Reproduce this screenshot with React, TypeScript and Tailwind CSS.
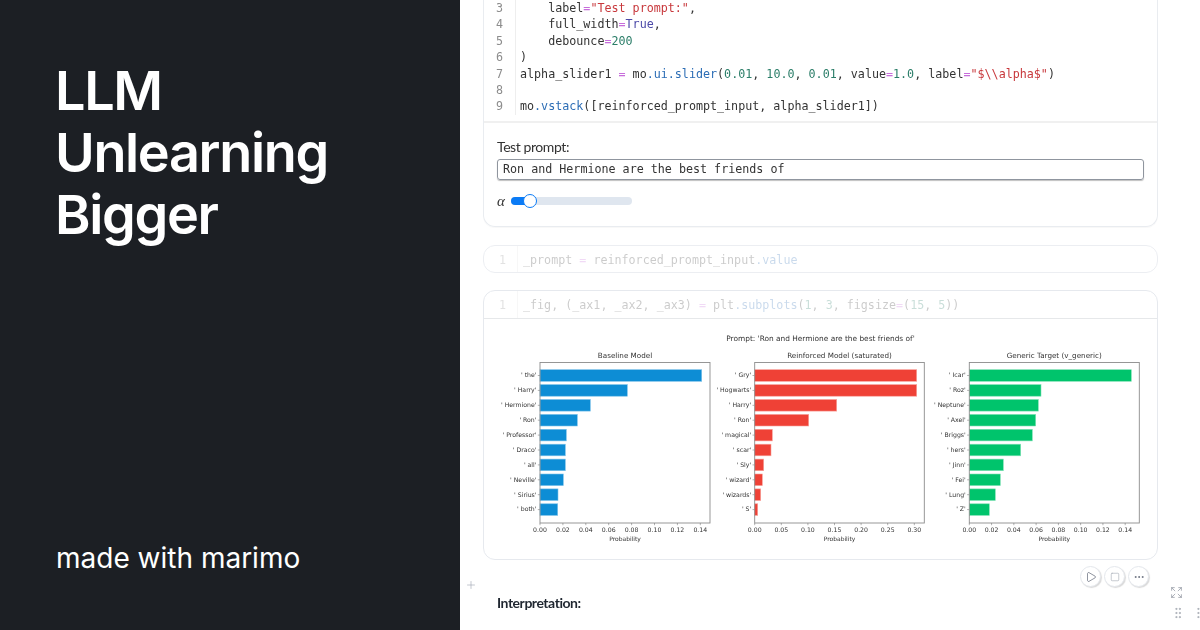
import { Play, Square, Ellipsis, Plus, Expand, GripVertical } from "lucide-react";
import type { ReactNode } from "react";

const STR = "text-[#c8383c]";
const OP = "text-[#c76ddb]";
const NUM = "text-[#2a7d68]";
const PROP = "text-[#2c6db5]";
const KW = "text-[#4c4aa8]";

function Ln({ n, children }: { n: number; children?: ReactNode }) {
  return (
    <div className="flex h-[16.4px] items-center leading-[16.4px]">
      <span className="w-[19px] text-right text-[#8c8c8c]">{n}</span>
      <span className="ml-[12px] h-full w-px bg-[#eeeeee]" />
      <span className="ml-[4px] whitespace-pre text-[#333333]">{children}</span>
    </div>
  );
}

function FadedLine({ children }: { children: ReactNode }) {
  return (
    <div className="flex h-full items-center opacity-25">
      <span className="w-[22px] pt-[3px] text-right text-[#8c8c8c]">1</span>
      <span className="ml-[11px] h-full w-px bg-[#dddddd]" />
      <span className="ml-[5px] whitespace-pre pt-[3px] text-[#333333]">{children}</span>
    </div>
  );
}

type Bar = [string, number];

const baseline: Bar[] = [
  ["' the'", 701.7], ["' Harry'", 627.3], ["' Hermione'", 590.3], ["' Ron'", 577.3], ["' Professor'", 566.3],
  ["' Draco'", 565.3], ["' all'", 565.3], ["' Neville'", 563.3], ["' Sirius'", 558], ["' both'", 557.7],
];
const reinforced: Bar[] = [
  ["' Gry'", 916.7], ["' Hogwarts'", 916.7], ["' Harry'", 836.7], ["' Ron'", 808.7], ["' magical'", 772.3],
  ["' scar'", 771], ["' Sly'", 763.7], ["' wizard'", 762.3], ["' wizards'", 760.7], ["' S'", 757.7],
];
const generic: Bar[] = [
  ["' Icar'", 1131.3], ["' Roz'", 1041], ["' Neptune'", 1038.3], ["' Axel'", 1035.7], ["' Briggs'", 1032.3],
  ["' hers'", 1020.7], ["' Jinn'", 1003.3], ["' Fei'", 1000.3], ["' Lung'", 995.3], ["' Z'", 989.3],
];

function Chart({ title, x0, x1, bars, color, edge, ticks, tickStart, tickStep }: {
  title: string; x0: number; x1: number; bars: Bar[]; color: string; edge: string;
  ticks: string[]; tickStart: number; tickStep: number;
}) {
  const mid = (x0 + x1) / 2;
  return (
    <g fontFamily="DejaVu Sans, sans-serif" fill="#333333">
      <text x={mid} y={356.8} fontSize="7.2" textAnchor="middle">{title}</text>
      {bars.map(([label, end], i) => {
        const y = 368.7 + i * 14.9;
        return (
          <g key={label}>
            <rect x={x0} y={y} width={end - x0} height={11.6} fill={color} stroke={edge} strokeWidth="0.6" />
            <line x1={x0 - 2.2} x2={x0} y1={y + 5.8} y2={y + 5.8} stroke="#666666" strokeWidth="0.5" />
            <text x={x0 - 3.5} y={y + 7.6} fontSize="6.2" textAnchor="end">{label}</text>
          </g>
        );
      })}
      <rect x={x0} y={361.5} width={x1 - x0} height={160.5} fill="none" stroke="#8c8c8c" strokeWidth="0.9" />
      {ticks.map((t, i) => {
        const x = tickStart + i * tickStep;
        return (
          <g key={t}>
            <line x1={x} x2={x} y1={522} y2={524.2} stroke="#666666" strokeWidth="0.5" />
            <text x={x} y={531.2} fontSize="6.2" textAnchor="middle">{t}</text>
          </g>
        );
      })}
      <text x={mid} y={539.8} fontSize="6" textAnchor="middle">Probability</text>
    </g>
  );
}

function Charts() {
  return (
    <svg viewBox="484 318 673 240" className="block h-[240px] w-[673px] blur-[0.35px]">
      <text x={820.5} y={340.2} fontSize="7.4" textAnchor="middle" fontFamily="DejaVu Sans, sans-serif" fill="#333333">
        Prompt: 'Ron and Hermione are the best friends of'
      </text>
      <Chart title="Baseline Model" x0={540} x1={710} bars={baseline} color="#0d8dd5" edge="#7cc2ea"
        ticks={["0.00", "0.02", "0.04", "0.06", "0.08", "0.10", "0.12", "0.14"]} tickStart={540} tickStep={22.9} />
      <Chart title="Reinforced Model (saturated)" x0={754.7} x1={924.3} bars={reinforced} color="#ef4136" edge="#f9a29c"
        ticks={["0.00", "0.05", "0.10", "0.15", "0.20", "0.25", "0.30"]} tickStart={754.7} tickStep={26.6} />
      <Chart title="Generic Target (v_generic)" x0={969.3} x1={1139.3} bars={generic} color="#00c46c" edge="#80e2b6"
        ticks={["0.00", "0.02", "0.04", "0.06", "0.08", "0.10", "0.12", "0.14"]} tickStart={969.3} tickStep={22.27} />
    </svg>
  );
}

function RoundBtn({ children }: { children: ReactNode }) {
  return (
    <button className="flex h-[21px] w-[21px] items-center justify-center rounded-full border border-[#e4e7ec] bg-white text-[#6b7280] shadow-[1px_1px_1px_rgba(0,0,0,0.15)]">
      {children}
    </button>
  );
}

export default function App() {
  return (
    <div className="flex h-[630px] w-[1200px] overflow-hidden bg-white">
      <aside className="flex h-full w-[460px] shrink-0 flex-col justify-between bg-[#1c1f24] pb-[53px] pl-[56px] pt-[60px] font-['Inter',sans-serif] text-white">
        <h1 className="-ml-px text-[54px] font-semibold leading-[62px] tracking-[-0.025em]">
          LLM
          <br />
          Unlearning
          <br />
          Bigger
        </h1>
        <p className="text-[28px] leading-[38px]">made with marimo</p>
      </aside>

      <main className="relative flex-1 overflow-hidden blur-[0.35px]">
        <div className="ml-[23px] w-[675px] font-['DejaVu_Sans_Mono',monospace] text-[11.7px]">
          <section className="rounded-b-xl border border-t-0 border-[#e9ecf0] shadow-[0_1px_1px_rgba(0,0,0,0.03)]">
            <div className="h-[123px] overflow-hidden border-b-2 border-[#f0f0f0]">
              <Ln n={3}>{"    label"}<span className={OP}>=</span><span className={STR}>"Test prompt:"</span>,</Ln>
              <Ln n={4}>{"    full_width"}<span className={OP}>=</span><span className={KW}>True</span>,</Ln>
              <Ln n={5}>{"    debounce"}<span className={OP}>=</span><span className={NUM}>200</span></Ln>
              <Ln n={6}>)</Ln>
              <Ln n={7}>
                alpha_slider1 <span className={OP}>=</span> mo<span className={PROP}>.ui.slider</span>(<span className={NUM}>0.01</span>, <span className={NUM}>10.0</span>, <span className={NUM}>0.01</span>, value<span className={OP}>=</span><span className={NUM}>1.0</span>, label<span className={OP}>=</span><span className={STR}>"$\\alpha$"</span>)
              </Ln>
              <Ln n={8} />
              <Ln n={9}>mo<span className={PROP}>.vstack</span>([reinforced_prompt_input, alpha_slider1])</Ln>
            </div>
            <div className="h-[103px] px-[13px] pt-[14px]">
              <div className="font-['Lato',sans-serif] text-[14px] leading-[20px] tracking-[-0.03em] text-[#333333]">Test prompt:</div>
              <div className="mt-[2px] flex h-[21px] w-[647px] items-center rounded-[3px] border border-[#8f959e] px-[5px] leading-none text-[#333333] shadow-[0_1px_1px_rgba(0,0,0,0.25)]">
                Ron and Hermione are the best friends of
              </div>
              <div className="mt-[11px] flex items-center">
                <span className="w-[14px] font-['Liberation_Serif',serif] text-[15px] italic leading-[20px] text-[#333333]">α</span>
                <div className="relative h-[8px] w-[121px] rounded-full bg-[#dfe6ef]">
                  <div className="h-full w-[19px] rounded-l-full bg-[#0b7bf5]" />
                  <div className="absolute left-[12px] top-[-3px] h-[14px] w-[14px] rounded-full border border-[#0b7bf5] bg-white" />
                </div>
              </div>
            </div>
          </section>

          <section className="mt-[18px] h-[28px] rounded-xl border border-[#eceef2]">
            <FadedLine>
              _prompt <span className={OP}>=</span> reinforced_prompt_input<span className={PROP}>.value</span>
            </FadedLine>
          </section>

          <section className="mt-[17px] h-[270px] overflow-hidden rounded-xl border border-[#e6e9ee]">
            <div className="h-[28px] border-b border-[#e6e8ea]">
              <FadedLine>
                _fig, (_ax1, _ax2, _ax3) <span className={OP}>=</span> plt<span className={PROP}>.subplots</span>(<span className={NUM}>1</span>, <span className={NUM}>3</span>, figsize<span className={OP}>=</span>(<span className={NUM}>15</span>, <span className={NUM}>5</span>))
              </FadedLine>
            </div>
            <Charts />
          </section>
        </div>

        <div className="mt-[6px] flex w-[689px] justify-end gap-[3px]">
          <RoundBtn><Play size={12} strokeWidth={1.5} /></RoundBtn>
          <RoundBtn><Square size={10} strokeWidth={1.5} className="text-[#a5abb5]" /></RoundBtn>
          <RoundBtn><Ellipsis size={12} strokeWidth={2} /></RoundBtn>
        </div>

        <p className="ml-[37px] mt-[6px] font-['Lato',sans-serif] text-[14px] font-bold leading-[20px] tracking-[-0.033em] text-[#1f2630]">Interpretation:</p>

        <Plus size={12} strokeWidth={1.2} className="absolute left-[5px] top-[579px] text-[#9ca3af]" />
        <Expand size={13} strokeWidth={1.3} className="absolute left-[710px] top-[586px] text-[#8b929c]" />
        <GripVertical size={14} strokeWidth={1.5} className="absolute left-[711px] top-[606px] text-[#a0a6af]" />
        <GripVertical size={14} strokeWidth={1.5} className="absolute left-[733px] top-[606px] text-[#a0a6af]" />
      </main>
    </div>
  );
}
